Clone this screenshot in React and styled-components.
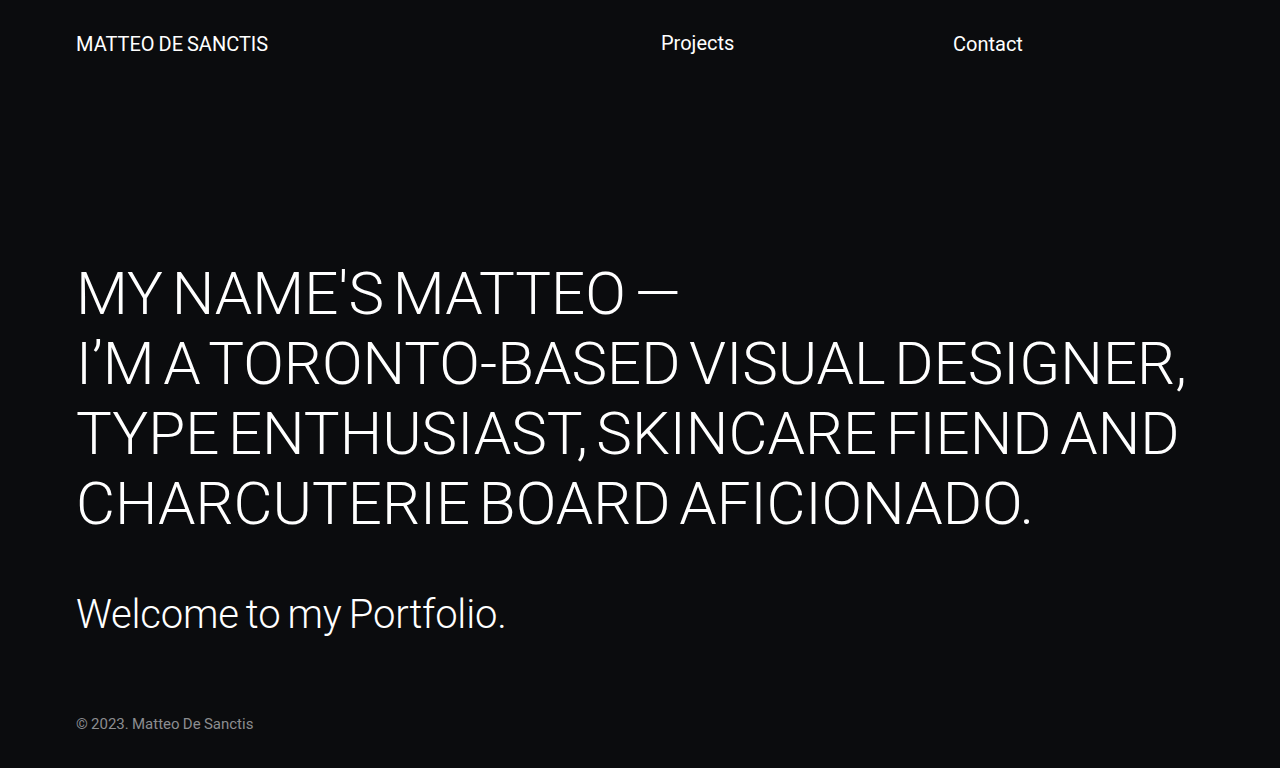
import React from "react"
import styled, { createGlobalStyle } from "styled-components"

const GlobalStyle = createGlobalStyle`
  html, body {
    margin: 0;
    padding: 0;
    background: #0b0c0e;
  }
  body {
    font-family: Roboto, "Liberation Sans", sans-serif;
    color: #ffffff;
  }
`

const Page = styled.div`
  min-height: 768px;
  box-sizing: border-box;
  padding: 0 76px;
  display: flex;
  flex-direction: column;
`

const Nav = styled.nav`
  display: grid;
  grid-template-columns: 585px 292px 1fr;
  align-items: center;
  padding-top: 31px;
  height: 26px;
`

const NavLink = styled.a`
  color: #ffffff;
  text-decoration: none;
  font-size: 20px;
  font-weight: 400;
  letter-spacing: 0;
  word-spacing: -0.05em;
  line-height: 26px;
  margin-top: ${(p) => p.$offset || 0}px;
`

const Hero = styled.main`
  padding-top: 202px;
`

const Heading = styled.h1`
  margin: 0;
  font-size: 60px;
  font-weight: 300;
  line-height: 70px;
  letter-spacing: 0;
  word-spacing: -0.1em;
  text-transform: uppercase;
  white-space: nowrap;
`

const Welcome = styled.p`
  margin: 51px 0 0;
  font-size: 40px;
  font-weight: 300;
  line-height: 50px;
  letter-spacing: -0.005em;
  word-spacing: -0.06em;
`

const Footer = styled.footer`
  margin-top: 74px;
  font-size: 15px;
  color: #8c8d90;
  letter-spacing: 0;
  word-spacing: -0.03em;
  line-height: 20px;
`

export default function App() {
  return (
    <Page>
      <GlobalStyle />
      <Nav>
        <NavLink href="#">MATTEO DE SANCTIS</NavLink>
        <NavLink href="#" $offset={-2}>Projects</NavLink>
        <NavLink href="#">Contact</NavLink>
      </Nav>
      <Hero>
        <Heading>
          My name's Matteo —
          <br />
          I’m a Toronto-based visual designer,
          <br />
          type enthusiast, skincare fiend and
          <br />
          charcuterie board aficionado.
        </Heading>
        <Welcome>Welcome to my Portfolio.</Welcome>
      </Hero>
      <Footer>© 2023. Matteo De Sanctis</Footer>
    </Page>
  )
}
